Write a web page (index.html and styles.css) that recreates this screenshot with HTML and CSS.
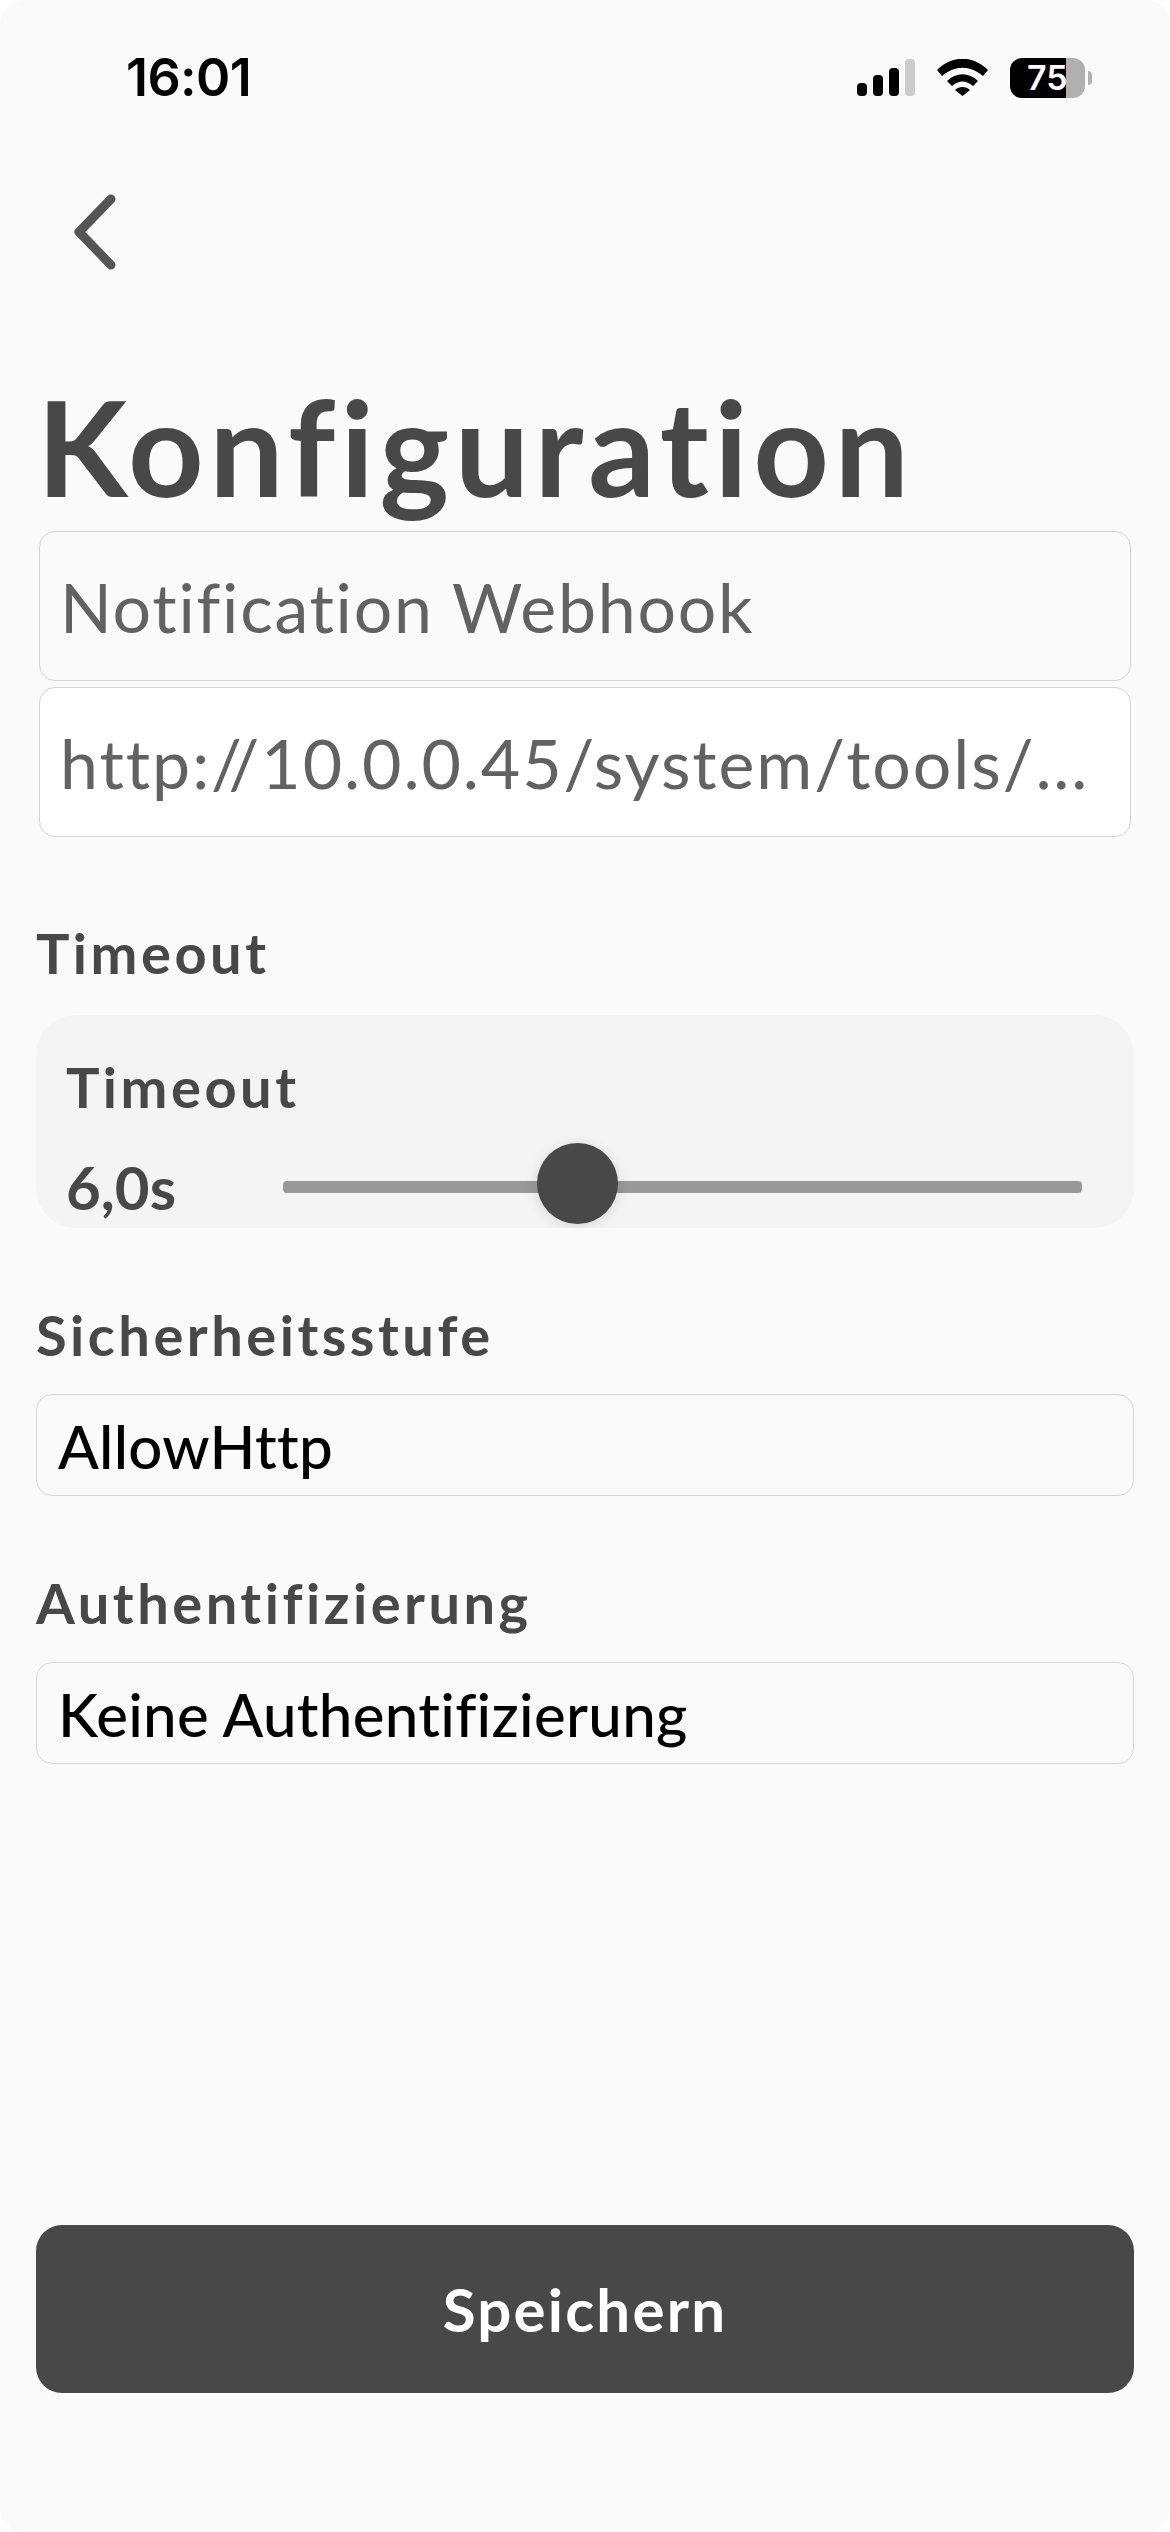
FILE: index.html
```html
<!DOCTYPE html>
<html lang="de">
<head>
    <meta charset="UTF-8">
    <meta name="viewport" content="width=device-width, initial-scale=1.0">
    <title>Konfiguration</title>
    <link rel="stylesheet" href="styles.css">
</head>
<body>
    <div class="status-bar">
        <span class="clock">16:01</span>
        <div class="status-icons">
            <svg class="signal" width="58" height="37" viewBox="0 0 58 37">
                <rect x="0" y="24" width="10" height="13" rx="4" fill="#000"/>
                <rect x="16" y="16" width="10" height="21" rx="4" fill="#000"/>
                <rect x="32" y="9" width="10" height="28" rx="4" fill="#000"/>
                <rect x="48" y="0" width="10" height="37" rx="4" fill="#ccc"/>
            </svg>
            <svg class="wifi" width="51" height="37" viewBox="0 0 51 37">
                <path d="M0 11 C15 -4 36 -4 51 11 L46 17 C33 6 18 6 5 17 Z" fill="#000"/>
                <path d="M10 22 C19 13 32 13 41 22 L36 27 C29 21 22 21 15 27 Z" fill="#000"/>
                <path d="M18 31 C22 27 29 27 33 31 L25.500 37 Z" fill="#000"/>
            </svg>
            <div class="battery">
                <div class="battery-body">
                    <span class="battery-level">75</span>
                </div>
                <div class="battery-tip"></div>
            </div>
        </div>
    </div>

    <div class="back-row">
        <svg width="48" height="76" viewBox="0 0 48 76">
            <path d="M41 5 L9 38 L41 71" fill="none" stroke="#555" stroke-width="9" stroke-linecap="round" stroke-linejoin="round"/>
        </svg>
    </div>

    <h1 class="page-title">Konfiguration</h1>

    <div class="text-fields">
        <div class="text-field">Notification Webhook</div>
        <div class="text-field text-field-white">http://10.0.0.45/system/tools/...</div>
    </div>

    <h2 class="section-label first-label">Timeout</h2>
    <div class="slider-card">
        <div class="slider-title">Timeout</div>
        <div class="slider-row">
            <span class="slider-value">6,0s</span>
            <div class="slider-track">
                <div class="slider-thumb"></div>
            </div>
        </div>
    </div>

    <h2 class="section-label">Sicherheitsstufe</h2>
    <div class="picker">AllowHttp</div>

    <h2 class="section-label">Authentifizierung</h2>
    <div class="picker">Keine Authentifizierung</div>

    <div class="spacer"></div>
    <button class="save-button">Speichern</button>
</body>
</html>
```

FILE: styles.css
```css
html, body {
    margin: 0;
    height: 100%;
}
html {
    background-color: #fff;
}
body {
    width: 1170px;
    height: 2532px;
    box-sizing: border-box;
    padding: 0 36px 139px;
    display: flex;
    flex-direction: column;
    overflow: hidden;
    border-radius: 24px;
    background-color: #fafafa;
    font-family: Lato, "Open Sans", sans-serif;
    font-variant-ligatures: none;
    color: #484848;
}
.status-bar {
    height: 155px;
    margin: 0 -36px;
    padding: 0 78px 0 126px;
    box-sizing: border-box;
    display: flex;
    justify-content: space-between;
    align-items: center;
}
.clock {
    font-family: Inter, sans-serif;
    font-weight: 600;
    font-size: 52px;
    letter-spacing: -0.6px;
    color: #000;
}
.status-icons {
    display: flex;
    align-items: center;
    gap: 22px;
}
.battery {
    display: flex;
    align-items: center;
}
.battery-body {
    width: 75px;
    height: 40px;
    border-radius: 12px;
    overflow: hidden;
    background: linear-gradient(90deg, #000 75%, #b0b0b0 75%);
}
.battery-level {
    display: block;
    padding-left: 17px;
    font-family: Inter, sans-serif;
    font-weight: 600;
    font-size: 34px;
    line-height: 40px;
    color: #fff;
}
.battery-tip {
    width: 4px;
    height: 14px;
    margin-left: 3px;
    border-radius: 0 7px 7px 0;
    background-color: #b0b0b0;
}
.back-row {
    height: 76px;
    margin-top: 39px;
    padding-left: 34px;
}
.page-title {
    margin: 91px 0 0 1px;
    font-size: 132px;
    line-height: 170px;
    font-weight: 700;
    letter-spacing: 5.4px;
    white-space: nowrap;
}
.text-fields {
    display: flex;
    flex-direction: column;
    gap: 6px;
    margin: 0 3px;
}
.text-field {
    height: 150px;
    box-sizing: border-box;
    padding: 0 20px;
    border: 1.5px solid #d4d4d4;
    border-radius: 16px;
    display: flex;
    align-items: center;
    font-size: 68px;
    letter-spacing: 1.75px;
    color: #626262;
    white-space: nowrap;
    overflow: hidden;
}
.text-field-white {
    background-color: #fff;
    letter-spacing: 1.95px;
}
.section-label {
    margin: 73px 0 25px;
    font-size: 56px;
    line-height: 68px;
    font-weight: 700;
    letter-spacing: 3.5px;
}
.first-label {
    margin: 82px 0 28px;
}
.slider-card {
    height: 213px;
    box-sizing: border-box;
    padding: 38px 52px 0 30px;
    border-radius: 40px;
    overflow: hidden;
    background-color: #f4f4f4;
}
.slider-title {
    font-size: 56px;
    line-height: 68px;
    font-weight: 700;
    letter-spacing: 3.5px;
}
.slider-row {
    display: flex;
    align-items: center;
    gap: 107px;
    margin-top: 32px;
}
.slider-value {
    font-size: 60px;
    line-height: 68px;
    font-weight: 700;
    width: 110px;
    flex-shrink: 0;
}
.slider-track {
    position: relative;
    flex: 1;
    height: 12px;
    border-radius: 4px;
    background-color: #999;
}
.slider-thumb {
    position: absolute;
    left: 254px;
    top: -38px;
    width: 81px;
    height: 81px;
    border-radius: 50%;
    background-color: #484848;
    box-shadow: 0 2px 14px rgba(0, 0, 0, 0.12);
}
.picker {
    height: 102px;
    box-sizing: border-box;
    padding: 2px 21px 0;
    border: 1.5px solid #d8d8d8;
    border-radius: 16px;
    display: flex;
    align-items: center;
    font-size: 60px;
    font-weight: 500;
    letter-spacing: 0.3px;
    color: #000;
    white-space: nowrap;
}
.spacer {
    flex: 1;
}
.save-button {
    height: 168px;
    border: none;
    border-radius: 26px;
    background-color: #484848;
    color: #fff;
    font-family: inherit;
    font-size: 60px;
    font-weight: 700;
    letter-spacing: 2.2px;
}
```
